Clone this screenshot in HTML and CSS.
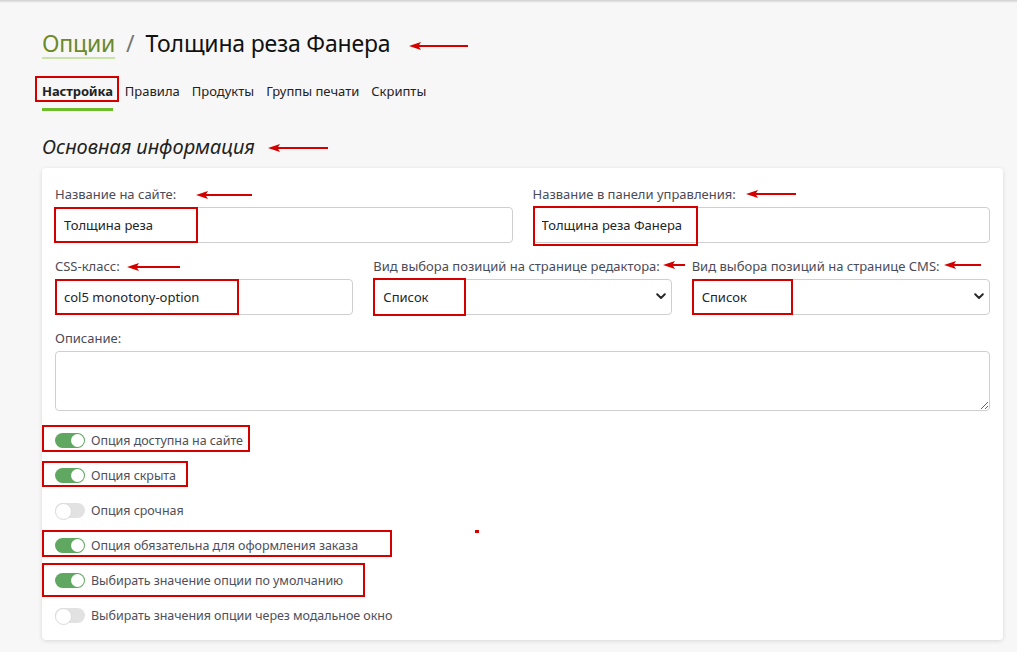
FILE: index.html
```html
<!DOCTYPE html>
<html lang="ru">
<head>
<meta charset="utf-8">
<title>Опции — Толщина реза Фанера</title>
<link rel="stylesheet" href="styles.css">
</head>
<body>
<div class="shade"></div>
<main class="page">
  <h1 class="title"><a class="crumb" href="#">Опции</a><span class="sep">/</span><span class="current">Толщина реза Фанера</span><svg class="arrow arrow-title" width="59" height="10" viewBox="0 0 59 10"><path d="M0 5 L12 1 L9.5 5 L12 9 Z"/><line x1="9" y1="5" x2="59" y2="5"/></svg></h1>

  <nav class="tabs">
    <a class="tab active" href="#">Настройка<span class="mark mark-tab"></span></a>
    <a class="tab" href="#">Правила</a>
    <a class="tab" href="#">Продукты</a>
    <a class="tab" href="#">Группы печати</a>
    <a class="tab" href="#">Скрипты</a>
  </nav>

  <h2 class="section-title">Основная информация<svg class="arrow arrow-section" width="60" height="10" viewBox="0 0 60 10"><path d="M0 5 L12 1 L9.5 5 L12 9 Z"/><line x1="9" y1="5" x2="60" y2="5"/></svg></h2>

  <section class="card">
    <div class="form">
      <div class="row row-2">
        <div class="field">
          <label class="label">Название на сайте:<svg class="arrow arrow-l1" width="56" height="10" viewBox="0 0 56 10"><path d="M0 5 L12 1 L9.5 5 L12 9 Z"/><line x1="9" y1="5" x2="56" y2="5"/></svg></label>
          <div class="control">
            <input class="input" type="text" value="Толщина реза">
            <span class="mark mark-name"></span>
          </div>
        </div>
        <div class="field">
          <label class="label">Название в панели управления:<svg class="arrow arrow-l2" width="50" height="10" viewBox="0 0 50 10"><path d="M0 5 L12 1 L9.5 5 L12 9 Z"/><line x1="9" y1="5" x2="50" y2="5"/></svg></label>
          <div class="control">
            <input class="input" type="text" value="Толщина реза Фанера">
            <span class="mark mark-admin"></span>
          </div>
        </div>
      </div>

      <div class="row row-3">
        <div class="field">
          <label class="label">CSS-класс:<svg class="arrow arrow-l3" width="53" height="10" viewBox="0 0 53 10"><path d="M0 5 L12 1 L9.5 5 L12 9 Z"/><line x1="9" y1="5" x2="53" y2="5"/></svg></label>
          <div class="control">
            <input class="input" type="text" value="col5 monotony-option">
            <span class="mark mark-css"></span>
          </div>
        </div>
        <div class="field">
          <label class="label">Вид выбора позиций на странице редактора:<svg class="arrow arrow-l4" width="22" height="10" viewBox="0 0 22 10"><path d="M0 5 L12 1 L9.5 5 L12 9 Z"/><line x1="9" y1="5" x2="22" y2="5"/></svg></label>
          <div class="control">
            <select class="input select"><option>Список</option></select>
            <svg class="chev" width="10" height="7" viewBox="0 0 10 7"><polyline points="1.2,1.2 5,5 8.8,1.2"/></svg>
            <span class="mark mark-sel1"></span>
          </div>
        </div>
        <div class="field">
          <label class="label">Вид выбора позиций на странице CMS:<svg class="arrow arrow-l5" width="37" height="10" viewBox="0 0 37 10"><path d="M0 5 L12 1 L9.5 5 L12 9 Z"/><line x1="9" y1="5" x2="37" y2="5"/></svg></label>
          <div class="control">
            <select class="input select"><option>Список</option></select>
            <svg class="chev" width="10" height="7" viewBox="0 0 10 7"><polyline points="1.2,1.2 5,5 8.8,1.2"/></svg>
            <span class="mark mark-sel2"></span>
          </div>
        </div>
      </div>

      <div class="field">
        <label class="label">Описание:</label>
        <textarea class="textarea"></textarea>
      </div>
    </div>

    <div class="switches">
      <div class="switch-row"><span class="switch on"></span><span class="switch-label">Опция доступна на сайте</span><span class="mark mark-sw1"></span></div>
      <div class="switch-row"><span class="switch on"></span><span class="switch-label">Опция скрыта</span><span class="mark mark-sw2"></span></div>
      <div class="switch-row"><span class="switch off"></span><span class="switch-label">Опция срочная</span></div>
      <div class="switch-row"><span class="switch on"></span><span class="switch-label">Опция обязательна для оформления заказа</span><span class="mark mark-sw4"></span></div>
      <div class="switch-row"><span class="switch on"></span><span class="switch-label">Выбирать значение опции по умолчанию</span><span class="mark mark-sw5"></span></div>
      <div class="switch-row"><span class="switch off"></span><span class="switch-label">Выбирать значения опции через модальное окно</span></div>
    </div>

    <span class="dot"></span>
  </section>
</main>
</body>
</html>
```

FILE: styles.css
```css
* { box-sizing: border-box; }

html, body { margin: 0; }

body {
  background: #f7f7f7;
  font-family: "Noto Sans", "Open Sans", sans-serif;
  color: #222;
  min-height: 652px;
}

.shade {
  height: 3px;
  background: linear-gradient(#cdcdcd, #f7f7f7);
}

.page {
  padding: 25px 14px 0 42px;
}

/* ---------- title ---------- */
.title {
  margin: 0;
  font-size: 23px;
  letter-spacing: -0.2px;
  font-weight: 400;
  line-height: 30px;
  color: #111;
  white-space: nowrap;
}

.crumb {
  color: #6b8a2a;
  text-decoration: underline;
  text-decoration-color: #c9e2a6;
  text-decoration-thickness: 2px;
  text-underline-offset: 5px;
}

.sep {
  color: #777;
  margin: 0 11px;
}

/* ---------- annotation arrows ---------- */
.arrow {
  display: inline-block;
  fill: #d40000;
  stroke: #d40000;
}
.arrow path { stroke: none; }
.arrow line { stroke-width: 2; }

.arrow-title { margin-left: 19px; vertical-align: 1px; }
.arrow-section { margin-left: 13px; vertical-align: 1px; }
.arrow-l1 { margin-left: 20px; vertical-align: -1px; }
.arrow-l2 { margin-left: 10px; vertical-align: 0; }
.arrow-l3 { margin-left: 7px; vertical-align: -1px; }
.arrow-l4 { margin-left: 3px; vertical-align: 1px; }
.arrow-l5 { margin-left: 4px; vertical-align: 1px; }

.mark {
  position: absolute;
  border: 2px solid #d40000;
  pointer-events: none;
}

/* ---------- tabs ---------- */
.tabs {
  display: flex;
  gap: 12px;
  margin-top: 24px;
}

.tab {
  position: relative;
  font-size: 13px;
  line-height: 18px;
  padding-bottom: 8px;
  border-bottom: 3px solid transparent;
  color: #222;
  text-decoration: none;
}

.tab.active {
  font-weight: 700;
  letter-spacing: -0.1px;
  border-bottom-color: #6cbf2a;
}

.mark-tab {
  left: -7px;
  right: -6px;
  top: -6px;
  bottom: 6px;
}

/* ---------- section ---------- */
.section-title {
  margin: 24px 0 0;
  font-size: 20px;
  font-style: italic;
  font-weight: 400;
  line-height: 24px;
  color: #222;
  white-space: nowrap;
}

.card {
  position: relative;
  margin-top: 9px;
  background: #fff;
  border-radius: 4px;
  box-shadow: 0 1px 4px rgba(0, 0, 0, 0.13);
  padding: 17px 13px 7px;
}

.form {
  display: grid;
  row-gap: 14px;
}

.row {
  display: grid;
  column-gap: 20px;
}
.row-2 { grid-template-columns: repeat(2, minmax(0, 1fr)); }
.row-3 { grid-template-columns: repeat(3, minmax(0, 1fr)); }

.field { min-width: 0; }

.label {
  display: block;
  font-size: 13px;
  line-height: 18px;
  margin-bottom: 4px;
  color: #4b4b57;
  white-space: nowrap;
}

.control {
  position: relative;
}

.input {
  display: block;
  width: 100%;
  height: 36px;
  border: 1px solid #cfcfcf;
  border-radius: 4px;
  padding: 0 8px;
  background: #fff;
  font-family: "Noto Sans", "Open Sans", sans-serif;
  font-size: 13px;
  font-weight: 400;
  color: #212529;
  outline: none;
}

.select {
  appearance: none;
  -webkit-appearance: none;
  padding: 0 24px 0 9px;
}

.chev {
  position: absolute;
  right: 6px;
  top: 14px;
  fill: none;
  stroke: #2a2a2a;
  stroke-width: 2;
  stroke-linecap: round;
  stroke-linejoin: round;
}

.textarea {
  display: block;
  width: 100%;
  height: 60px;
  border: 1px solid #cfcfcf;
  border-radius: 4px;
  background: #fff;
  resize: vertical;
  font-family: "Noto Sans", "Open Sans", sans-serif;
  font-size: 13px;
}

.mark-name { left: -1px; top: 0; width: 144px; height: 36px; }
.mark-admin { left: 0; top: -1px; width: 165px; height: 40px; }
.mark-css { left: 0; top: 0; width: 184px; height: 36px; }
.mark-sel1 { left: 0; top: -1px; width: 93px; height: 38px; }
.mark-sel2 { left: 0; top: 0; width: 101px; height: 36px; }

/* ---------- switches ---------- */
.switches {
  margin-top: 12px;
}

.switch-row {
  position: relative;
  display: flex;
  align-items: center;
  gap: 6px;
  height: 35px;
}

.switch {
  position: relative;
  flex: none;
  width: 30px;
  height: 15px;
  border-radius: 8px;
}

.switch::after {
  content: "";
  position: absolute;
  top: 1px;
  width: 13px;
  height: 13px;
  border-radius: 50%;
  background: #fff;
}

.switch.on { background: #60a862; }
.switch.on::after { right: 1px; }

.switch.off { background: #e2e2e2; }
.switch.off::after {
  left: 0;
  top: 0;
  width: 15px;
  height: 15px;
  border: 1px solid #dadada;
}

.switch-label {
  font-size: 12.5px;
  letter-spacing: -0.05px;
  color: #4f4f5a;
  white-space: nowrap;
}

.mark-sw1 { left: -13px; top: 2px; width: 208px; height: 27px; }
.mark-sw2 { left: -13px; top: 3px; width: 146px; height: 26px; }
.mark-sw4 { left: -13px; top: 2px; width: 350px; height: 27px; }
.mark-sw5 { left: -13px; top: 0; width: 323px; height: 34px; }

.dot {
  position: absolute;
  left: 433px;
  top: 362px;
  width: 4px;
  height: 3px;
  background: #d40000;
}
```
